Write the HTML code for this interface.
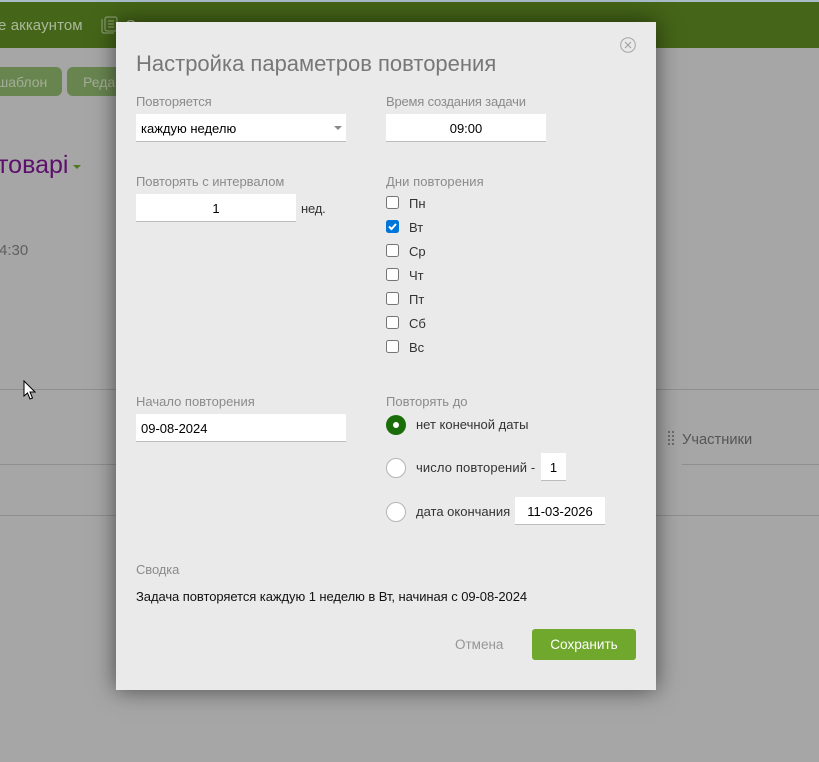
<!DOCTYPE html>
<html><head><meta charset="utf-8">
<style>
*{box-sizing:border-box}
html,body{margin:0;padding:0;width:819px;height:762px;overflow:hidden;background:#a6a6a6}
body{position:relative;font-family:"Liberation Sans","DejaVu Sans",sans-serif;font-size:13px;color:#000}
.a{position:absolute;white-space:nowrap}
.t{line-height:18px;height:18px}
.lab{color:#8b8b8b;font-size:13px}
.dark{color:#333}
.inp{position:absolute;background:#fff;border-bottom:1px solid #bdbdbd;height:28px;line-height:29px;font-size:13px;color:#000;white-space:nowrap}
.cb{position:absolute;left:386px;width:13px;height:13px;background:#fff;border:1.5px solid #767676;border-radius:2.5px}
.rd{position:absolute;left:386px;width:20px;height:20px;border-radius:50%;background:#fff;border:1px solid #b5b5b5}
.hr{position:absolute;height:1px;background:#8f8f8f}
</style></head><body>
<div class="a" style="left:0;top:0;width:819px;height:2px;background:#a9bcc9"></div>
<div class="a" style="left:0;top:2px;width:819px;height:46px;background:#456518"></div>
<div class="a t" style="left:-2px;top:17px;color:#a9b99b;font-size:15px;letter-spacing:.1px">е аккаунтом</div>
<svg class="a" style="left:100px;top:16px" width="20" height="18" viewBox="0 0 20 18" fill="none" stroke="#93a584" stroke-width="1"><rect x="5" y="1" width="12" height="14" rx="2"/><path d="M2 3v12q0 2 2 2h10M8 5h6M8 8h6M8 11h6" /></svg>
<div class="a t" style="left:125px;top:17px;color:#a9b99b;font-size:15px">С</div>
<div class="a" style="left:0;top:67px;width:62px;height:29px;background:#688550;border-radius:0 6px 6px 0"></div>
<div class="a t" style="left:-3px;top:73px;color:#a5ad98;font-size:14px">шаблон</div>
<div class="a" style="left:67px;top:67px;width:60px;height:29px;background:#688550;border-radius:6px 0 0 6px"></div>
<div class="a t" style="left:83px;top:73px;color:#a5ad98;font-size:14px">Редак</div>
<div class="a" style="left:-3px;top:150px;color:#5c0f6b;font-size:25px;line-height:31px">товарі</div>
<div class="a" style="left:73px;top:165px;width:0;height:0;border-left:4px solid transparent;border-right:4px solid transparent;border-top:4px solid #4f7a22"></div>
<div class="a t" style="left:-1px;top:242px;color:#5f5f5f;font-size:15px">4:30</div>
<div class="hr" style="left:0;top:389px;width:819px"></div>
<div class="hr" style="left:0;top:464px;width:116px"></div>
<div class="hr" style="left:682px;top:464px;width:137px"></div>
<div class="hr" style="left:0;top:515px;width:819px"></div>
<svg class="a" style="left:667px;top:430px" width="8" height="15" fill="#6d6d6d"><rect x="1" y="1" width="2" height="2"/><rect x="5" y="1" width="2" height="2"/><rect x="1" y="5" width="2" height="2"/><rect x="5" y="5" width="2" height="2"/><rect x="1" y="9" width="2" height="2"/><rect x="5" y="9" width="2" height="2"/><rect x="1" y="13" width="2" height="2"/><rect x="5" y="13" width="2" height="2"/></svg>
<div class="a t" style="left:682px;top:431px;color:#555;font-size:14.7px">Участники</div>
<svg class="a" style="left:23px;top:380px" width="14" height="21" viewBox="0 0 14 21"><path d="M1 1v15l3.500-3 2.500 6 2.500-1-2.500-6h5z" fill="#fff" stroke="#000" stroke-width="1"/></svg>

<div class="a" style="left:116px;top:22px;width:540px;height:668px;background:#eaeaea;box-shadow:0 0 22px rgba(0,0,0,.55)"></div>

<svg class="a" style="left:620px;top:37px" width="16" height="16" viewBox="0 0 16 16" fill="none" stroke="#a3a3a3"><circle cx="8" cy="8" r="7.300"/><path d="M5 5l6 6M11 5l-6 6" stroke-width="1.200"/></svg>
<div class="a" style="left:136px;top:50px;color:#777;font-size:22px;line-height:28px">Настройка параметров повторения</div>

<div class="a t lab" style="left:136px;top:93px;letter-spacing:-.08px">Повторяется</div>
<div class="inp" style="left:136px;top:114px;width:210px;padding-left:5px">каждую неделю</div>
<div class="a" style="left:334px;top:126px;width:0;height:0;border-left:4px solid transparent;border-right:4px solid transparent;border-top:4px solid #8a8a8a"></div>

<div class="a t lab" style="left:386px;top:93px;letter-spacing:-.19px">Время создания задачи</div>
<div class="inp" style="left:386px;top:114px;width:160px;text-align:center">09:00</div>

<div class="a t lab" style="left:136px;top:173px;letter-spacing:-.05px">Повторять с интервалом</div>
<div class="inp" style="left:136px;top:194px;width:160px;text-align:center">1</div>
<div class="a t dark" style="left:301px;top:200px;letter-spacing:-.2px">нед.</div>

<div class="a t lab" style="left:386px;top:173px;letter-spacing:.07px">Дни повторения</div>
<div class="cb" style="top:196px"></div><div class="a t dark" style="left:409px;top:195px">Пн</div>
<div class="cb" style="top:220px;background:#0075d9;border-color:#0075d9"></div>
<svg class="a" style="left:386px;top:220px" width="13" height="13" fill="none" stroke="#fff" stroke-width="2"><path d="M3 6.500l2.500 2.500 4.500-5"/></svg>
<div class="a t dark" style="left:409px;top:219px">Вт</div>
<div class="cb" style="top:244px"></div><div class="a t dark" style="left:409px;top:243px">Ср</div>
<div class="cb" style="top:268px"></div><div class="a t dark" style="left:409px;top:267px">Чт</div>
<div class="cb" style="top:292px"></div><div class="a t dark" style="left:409px;top:291px">Пт</div>
<div class="cb" style="top:316px"></div><div class="a t dark" style="left:409px;top:315px">Сб</div>
<div class="cb" style="top:340px"></div><div class="a t dark" style="left:409px;top:339px">Вс</div>

<div class="a t lab" style="left:136px;top:393px">Начало повторения</div>
<div class="inp" style="left:136px;top:414px;width:210px;padding-left:5px">09-08-2024</div>

<div class="a t lab" style="left:386px;top:393px">Повторять до</div>
<div class="rd" style="top:415px;background:#1a6e0a;border:0"></div>
<div class="a" style="left:393px;top:422px;width:6px;height:6px;border-radius:50%;background:#fff"></div>
<div class="a t dark" style="left:416px;top:416px">нет конечной даты</div>
<div class="rd" style="top:458px"></div>
<div class="a t dark" style="left:416px;top:459px;letter-spacing:.12px">число повторений -</div>
<div class="inp" style="left:541px;top:453px;width:25px;text-align:center">1</div>
<div class="rd" style="top:502px"></div>
<div class="a t dark" style="left:416px;top:503px">дата окончания</div>
<div class="inp" style="left:515px;top:497px;width:90px;text-align:center">11-03-2026</div>

<div class="a t lab" style="left:136px;top:561px;letter-spacing:-.1px">Сводка</div>
<div class="a t" style="left:136px;top:588px;color:#111;letter-spacing:-.065px">Задача повторяется каждую 1 неделю в Вт, начиная с 09-08-2024</div>
<div class="a t" style="left:455px;top:636px;color:#959595;font-size:13.5px">Отмена</div>
<div class="a" style="left:532px;top:629px;width:104px;height:31px;background:#6fa82c;border-radius:3px;color:#fff;font-size:13.6px;line-height:31px;text-align:center">Сохранить</div>
</body></html>
